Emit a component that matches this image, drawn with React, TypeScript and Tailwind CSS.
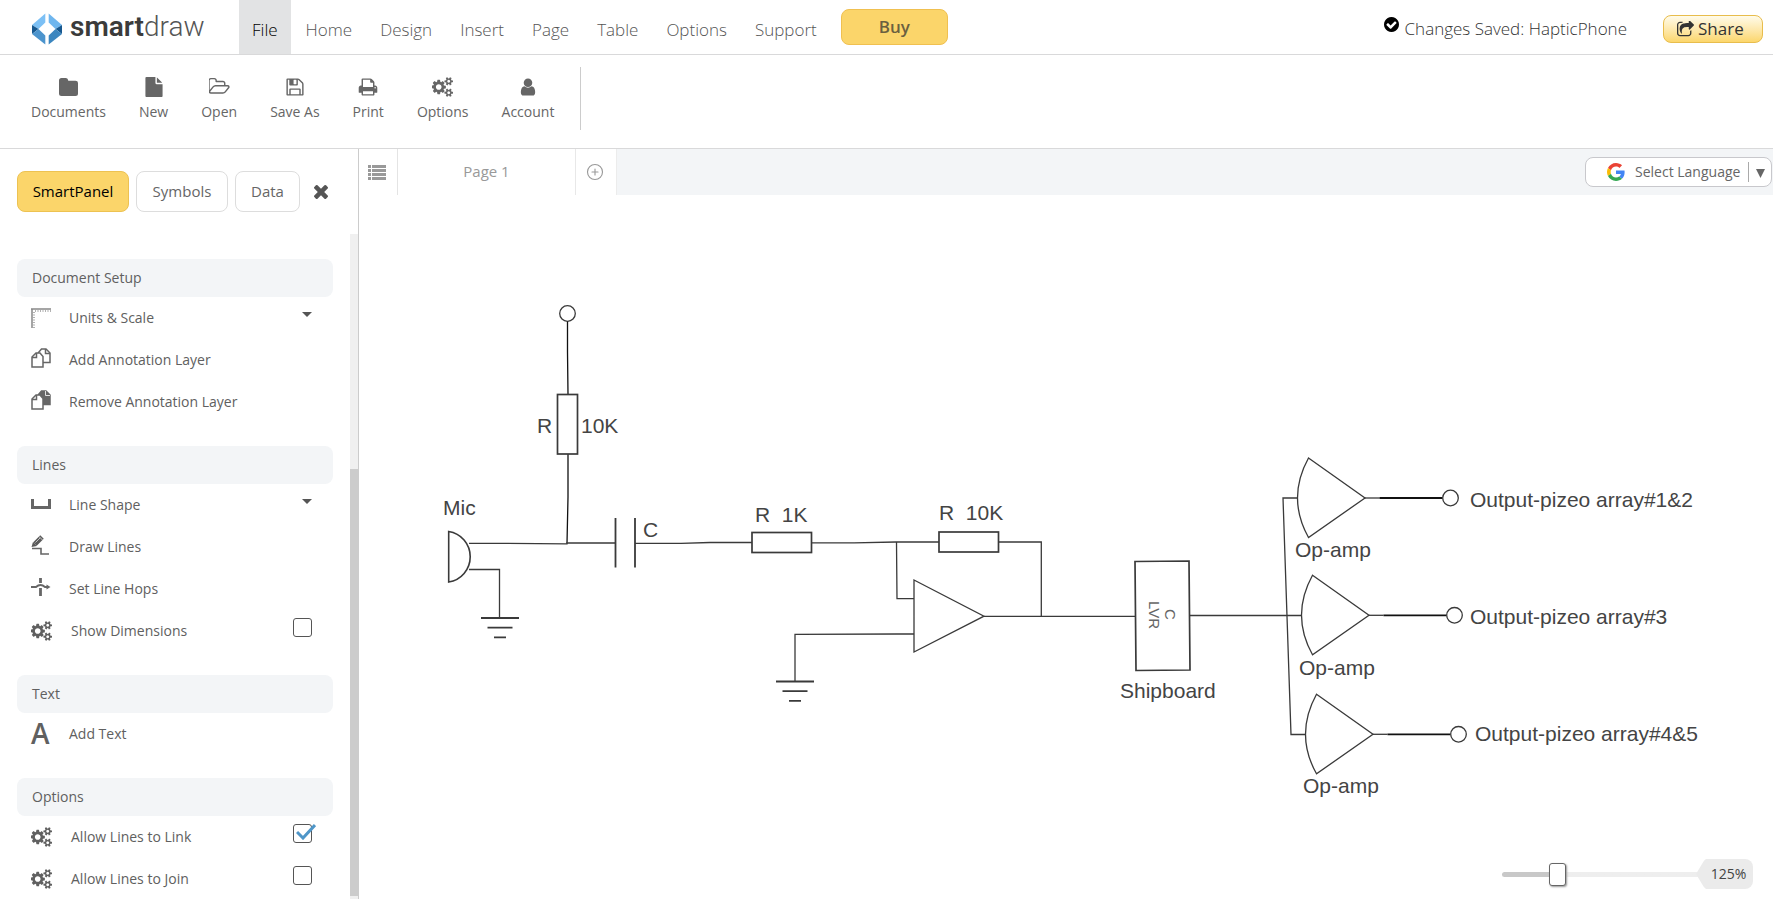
import React from "react";
import { CirclePlus } from "lucide-react";

const PATHS = {
  file: "M1152 512v-472q22 14 36 28l408 408q14 14 28 36h-472zm-128 32q0 40 28 68t68 28h544v1056q0 40-28 68t-68 28h-1344q-40 0-68-28t-28-68v-1600q0-40 28-68t68-28h800v544z",
  folderOpen:
    "M1717 931q0-35-53-35h-1088q-40 0-85.5 21.5t-71.5 52.5l-294 363q-18 24-18 40 0 35 53 35h1088q40 0 86-22t71-53l294-363q18-22 18-39zm-1141-163h768v-160q0-40-28-68t-68-28h-576q-40 0-68-28t-28-68v-64q0-40-28-68t-68-28h-320q-40 0-68 28t-28 68v853l256-315q44-53 116-87.5t140-34.5zm1269 163q0 62-46 120l-295 363q-43 53-116 87.5t-140 34.5h-1088q-92 0-158-66t-66-158v-960q0-92 66-158t158-66h320q92 0 158 66t66 158v32h544q92 0 158 66t66 158v160h192q54 0 99 24.5t67 70.5q15 32 15 68z",
  print:
    "M448 1536h896v-256h-896v256zm0-640h896v-384h-160q-40 0-68-28t-28-68v-160h-640v640zm1152 64q0-26-19-45t-45-19-45 19-19 45 19 45 45 19 45-19 19-45zm128 0v416q0 13-9.5 22.5t-22.5 9.5h-224v160q0 40-28 68t-68 28h-960q-40 0-68-28t-28-68v-160h-224q-13 0-22.5-9.5t-9.5-22.5v-416q0-79 56.5-135.5t135.5-56.5h64v-544q0-40 28-68t68-28h672q40 0 88 20t76 48l152 152q28 28 48 76t20 88v256h64q79 0 135.5 56.5t56.5 135.5z",
  save: "M512 1536h768v-384h-768v384zm896 0h128v-896q0-14-10-38.5t-20-34.5l-281-281q-10-10-34-20t-39-10v416q0 40-28 68t-68 28h-576q-40 0-68-28t-28-68v-416h-128v1280h128v-416q0-40 28-68t68-28h832q40 0 68 28t28 68v416zm-384-928v-320q0-13-9.5-22.5t-22.5-9.5h-192q-13 0-22.5 9.5t-9.5 22.5v320q0 13 9.5 22.5t22.5 9.5h192q13 0 22.5-9.5t9.5-22.5zm640 32v928q0 40-28 68t-68 28h-1344q-40 0-68-28t-28-68v-1344q0-40 28-68t68-28h928q40 0 88 20t76 48l280 280q28 28 48 76t20 88z",
  user: "M1536 1399q0 109-62.5 187t-150.5 78h-854q-88 0-150.5-78t-62.5-187q0-85 8.5-160.5t31.5-152 58.5-131 94-89 134.5-34.5q131 128 313 128t313-128q76 0 134.5 34.5t94 89 58.5 131 31.5 152 8.5 160.5zm-256-887q0 159-112.5 271.5t-271.5 112.5-271.5-112.5-112.5-271.5 112.5-271.5 271.5-112.5 271.5 112.5 112.5 271.5z",
  cogs: "M832 896q0-106-75-181t-181-75-181 75-75 181 75 181 181 75 181-75 75-181zm768 512q0-52-38-90t-90-38-90 38-38 90q0 53 37.5 90.5t90.5 37.5 90.5-37.5 37.5-90.5zm0-1024q0-52-38-90t-90-38-90 38-38 90q0 53 37.5 90.5t90.5 37.5 90.5-37.5 37.5-90.5zm-384 421v185q0 10-7 19.5t-16 10.5l-155 24q-11 35-32 76 34 48 90 115 7 11 7 20 0 12-7 19-23 30-82.5 89.5t-78.5 59.5q-11 0-21-7l-115-90q-37 19-77 31-11 108-23 155-7 24-30 24h-186q-11 0-20-7.5t-10-17.5l-23-153q-34-10-75-31l-118 89q-7 7-20 7-11 0-21-8-144-133-144-160 0-9 7-19 10-14 41-53t47-61q-23-44-35-82l-152-24q-10-1-17-9.5t-7-19.5v-185q0-10 7-19.5t16-10.5l155-24q11-35 32-76-34-48-90-115-7-11-7-20 0-12 7-20 22-30 82-89t79-59q11 0 21 7l115 90q34-18 77-32 11-108 23-154 7-24 30-24h186q11 0 20 7.5t10 17.5l23 153q34 10 75 31l118-89q8-7 20-7 11 0 21 8 144 133 144 160 0 8-7 19-12 16-42 54t-45 60q23 48 34 82l152 23q10 2 17 10.5t7 19.5zm640 533v140q0 16-149 31-12 27-30 52 51 113 51 138 0 4-4 7-122 71-124 71-8 0-46-47t-52-68q-20 2-30 2t-30-2q-14 21-52 68t-46 47q-2 0-124-71-4-3-4-7 0-25 51-138-18-25-30-52-149-15-149-31v-140q0-16 149-31 13-29 30-52-51-113-51-138 0-4 4-7 4-2 35-20t59-34 30-16q8 0 46 46.5t52 67.5q20-2 30-2t30 2q51-71 92-112l6-2q4 0 124 70 4 3 4 7 0 25-51 138 17 23 30 52 149 15 149 31zm0-1024v140q0 16-149 31-12 27-30 52 51 113 51 138 0 4-4 7-122 71-124 71-8 0-46-47t-52-68q-20 2-30 2t-30-2q-14 21-52 68t-46 47q-2 0-124-71-4-3-4-7 0-25 51-138-18-25-30-52-149-15-149-31v-140q0-16 149-31 13-29 30-52-51-113-51-138 0-4 4-7 4-2 35-20t59-34 30-16q8 0 46 46.5t52 67.5q20-2 30-2t30 2q51-71 92-112l6-2q4 0 124 70 4 3 4 7 0 25-51 138 17 23 30 52 149 15 149 31z",
  checkCircle:
    "M1412 734q0-28-18-46l-91-90q-19-19-45-19t-45 19l-408 407-226-226q-19-19-45-19t-45 19l-91 90q-18 18-18 46 0 27 18 45l362 362q19 19 45 19 27 0 46-19l543-543q18-18 18-45zm252 162q0 209-103 385.5t-279.5 279.5-385.5 103-385.5-103-279.5-279.5-103-385.5 103-385.5 279.5-279.5 385.5-103 385.5 103 279.5 279.5 103 385.5z",
  times:
    "M1490 1322q0 40-28 68l-136 136q-28 28-68 28t-68-28l-294-294-294 294q-28 28-68 28t-68-28l-136-136q-28-28-28-68t28-68l294-294-294-294q-28-28-28-68t28-68l136-136q28-28 68-28t68 28l294 294 294-294q28-28 68-28t68 28l136 136q28 28 28 68t-28 68l-294 294 294 294q28 28 28 68z",
  share:
    "M1472 989v259q0 119-84.5 203.5t-203.5 84.5h-832q-119 0-203.5-84.5t-84.5-203.5v-832q0-119 84.5-203.5t203.5-84.5h255q13 0 22.5 9.5t9.5 22.5q0 27-26 32-77 26-133 60-10 4-16 4h-112q-66 0-113 47t-47 113v832q0 66 47 113t113 47h832q66 0 113-47t47-113v-214q0-19 18-29 28-13 54-37 16-16 35-8 21 9 21 29zm237-496l-384 384q-18 19-45 19-12 0-25-5-39-17-39-59v-192h-160q-323 0-438 131-119 137-74 473 3 23-20 34-8 2-12 2-16 0-26-13-10-14-21-31t-39.5-68.5-49.5-99.5-38.5-114-17.5-122q0-49 3.5-91t14-90 28-88 47-81.5 68.5-74 94.5-61.5 124.5-48.5 159.5-30.5 196.5-11h160v-192q0-42 39-59 13-5 25-5 26 0 45 19l384 384q19 19 19 45t-19 45z",
};

function Glyph({ d, box = "0 0 1792 1792", className }: { d: string; box?: string; className?: string }) {
  return (
    <svg viewBox={box} fill="currentColor" className={className} aria-hidden="true">
      <path d={d} />
    </svg>
  );
}

const Cogs = ({ className }: { className?: string }) => (
  <Glyph d={PATHS.cogs} box="0 0 1920 1792" className={className} />
);

function Logo() {
  return (
    <a href="#" aria-label="smartdraw" className="flex h-full w-[239px] shrink-0 items-center pt-1 pl-8">
      <svg viewBox="0 0 30 32" className="h-8 w-[30px]" aria-hidden="true">
        <path d="M13.300 0.500V9.500L6.500 16L0 12Z" fill="#7cc0f5" />
        <path d="M16.700 0.500V9.500L23.500 16L30 12Z" fill="#6fb6ee" />
        <path d="M0 12L6.500 16L0 21Z" fill="#17588f" />
        <path d="M30 12L23.500 16L30 21Z" fill="#17588f" />
        <path d="M0 21L6.500 16L13.300 22.500V31.500Z" fill="#4c94cd" />
        <path d="M30 21L23.500 16L16.700 22.500V31.500Z" fill="#3c86bf" />
      </svg>
      <span className="mb-1 ml-2 font-['Roboto','Liberation_Sans',sans-serif] text-[28px] leading-8 font-light text-[#555]">
        <span className="font-semibold text-[#3b3b3b]">smart</span>draw
      </span>
    </a>
  );
}

function Header() {
  return (
    <header className="flex h-[55px] shrink-0 items-center border-b border-[#d9d9da]">
      <Logo />
      <nav className="flex h-full items-center text-[17px] font-light text-[#555]">
        <a href="#" className="mr-[15px] flex h-full items-center bg-[#e2e3e4] px-[13px] pt-[6px] text-black">
          File
        </a>
        <div className="flex gap-[28px] pt-[6px]">
          {["Home", "Design", "Insert", "Page", "Table", "Options", "Support"].map((n) => (
            <a href="#" key={n}>
              {n}
            </a>
          ))}
        </div>
      </nav>
      <button className="ml-6 h-9 w-[107px] rounded-lg border border-[#f0c050] bg-[#fbd56a] text-[17px] font-semibold text-[#6b6040]">
        Buy
      </button>
      <div className="ml-auto flex items-center gap-[6px] pt-[3px] text-[17px] font-light text-[#333]">
        <Glyph d={PATHS.checkCircle} box="128 128 1536 1536" className="mb-2 size-[15px] text-black" />
        <span>Changes Saved: HapticPhone</span>
      </div>
      <button className="mt-[3px] mr-[10px] ml-9 flex h-7 w-[100px] items-center gap-1 rounded-lg border border-[#e8bd4c] bg-linear-to-b from-[#fffbe9] to-[#fcd66b] pl-[13px] text-[17px] text-[#333]">
        <Glyph d={PATHS.share} box="64 64 1664 1536" className="h-4 w-[17px]" />
        Share
      </button>
    </header>
  );
}

const TOOLS: { label: string; icon: React.ReactNode }[] = [
  {
    label: "Documents",
    icon: (
      <svg viewBox="0 0 19 18" fill="currentColor" className="h-[18px] w-[19px]" aria-hidden="true">
        <path d="M2.500 0H7Q9 0 9.300 2.800H16.500Q19 2.800 19 5V15.500Q19 18 16.500 18H2.500Q0 18 0 15.500V2.500Q0 0 2.500 0Z" />
      </svg>
    ),
  },
  { label: "New", icon: <Glyph d={PATHS.file} className="size-5" box="128 0 1536 1792" /> },
  { label: "Open", icon: <Glyph d={PATHS.folderOpen} className="size-[21px]" box="0 0 1879 1792" /> },
  { label: "Save As", icon: <Glyph d={PATHS.save} className="size-5" /> },
  { label: "Print", icon: <Glyph d={PATHS.print} className="size-5" /> },
  { label: "Options", icon: <Cogs className="h-5 w-[22px]" /> },
  { label: "Account", icon: <Glyph d={PATHS.user} className="size-5" /> },
];

function Toolbar() {
  return (
    <div className="flex h-[94px] shrink-0 items-start border-b border-[#d9d9da] pt-3 pl-[31px]">
      <div className="flex gap-[33px] pt-[9px]">
        {TOOLS.map((t) => (
          <button key={t.label} className="flex flex-col items-center gap-[5px] text-sm text-[#666]">
            <span className="flex h-[21px] items-center">{t.icon}</span>
            {t.label}
          </button>
        ))}
      </div>
      <div className="ml-[26px] h-[63px] w-px bg-[#ccc]" />
    </div>
  );
}

function LayerIcon({ filled }: { filled?: boolean }) {
  return (
    <svg viewBox="0 0 20 20" className="mb-1 size-5" fill="none" stroke="#666" strokeWidth="1.500" aria-hidden="true">
      <path d="M7.500 5.500 V4.500 L10.500 1 H15 L19 5 V14.500 H12" fill={filled ? "#666" : "none"} />
      <path d="M14.500 1 V5.500 H19" stroke={filled ? "#fff" : "#666"} strokeWidth={filled ? "0.8" : "1.500"} />
      <path d="M1 9 L5 5 H9 L12 8.500 V19 H1Z" fill="#fff" />
      <path d="M1 9.500 H5.500 V5" />
    </svg>
  );
}

function RulerIcon() {
  return (
    <svg viewBox="0 0 20 20" className="size-5" fill="none" aria-hidden="true">
      <path d="M0 1H20M1 1V20" stroke="#888" strokeWidth="1.500" />
      <path d="M4 3H20M3 4V20" stroke="#999" strokeWidth="1.500" strokeDasharray="1 1.500" />
    </svg>
  );
}

function LineShapeIcon() {
  return (
    <svg viewBox="0 0 20 20" className="size-5" fill="none" aria-hidden="true">
      <path d="M1.500 4V12.500H18.500V4" stroke="#666" strokeWidth="3" />
    </svg>
  );
}

function DrawIcon() {
  return (
    <svg viewBox="0 0 20 20" className="mb-1 size-5" fill="none" aria-hidden="true">
      <path d="M4 9 L11 2" stroke="#5a5a5a" strokeWidth="5" />
      <path d="M0.500 12 L2 7 L6 11Z" fill="#5a5a5a" />
      <path d="M4.500 7.500 L9 3" stroke="#ddd" strokeWidth="0.800" />
      <path d="M8 1.500 L11.500 5" stroke="#fff" strokeWidth="0.700" />
      <path d="M1 13.500H10V19H18" stroke="#666" strokeWidth="1.600" />
    </svg>
  );
}

function HopIcon() {
  return (
    <svg viewBox="0 0 20 20" className="mb-1 size-5" fill="none" stroke="#666" aria-hidden="true">
      <path d="M9.500 1V6M9.500 11V19" strokeWidth="2.800" />
      <path d="M0 10H5Q9.500 6 14 10H17" strokeWidth="2" />
      <path d="M15.500 7.500L19.500 10L15.500 12.500Z" fill="#666" stroke="none" />
    </svg>
  );
}

type Item = { label: string; icon: React.ReactNode; kind?: "menu" | "check"; checked?: boolean };

const GROUPS: { title: string; items: Item[] }[] = [
  {
    title: "Document Setup",
    items: [
      { label: "Units & Scale", icon: <RulerIcon />, kind: "menu" },
      { label: "Add Annotation Layer", icon: <LayerIcon /> },
      { label: "Remove Annotation Layer", icon: <LayerIcon filled /> },
    ],
  },
  {
    title: "Lines",
    items: [
      { label: "Line Shape", icon: <LineShapeIcon />, kind: "menu" },
      { label: "Draw Lines", icon: <DrawIcon /> },
      { label: "Set Line Hops", icon: <HopIcon /> },
      { label: "Show Dimensions", icon: <Cogs className="h-5 w-[22px]" />, kind: "check" },
    ],
  },
  {
    title: "Text",
    items: [
      {
        label: "Add Text",
        icon: (
          <span className="text-[28px] leading-7 font-semibold" aria-hidden="true">
            A
          </span>
        ),
      },
    ],
  },
  {
    title: "Options",
    items: [
      { label: "Allow Lines to Link", icon: <Cogs className="h-5 w-[22px]" />, kind: "check", checked: true },
      { label: "Allow Lines to Join", icon: <Cogs className="h-5 w-[22px]" />, kind: "check" },
    ],
  },
];

function Row({ item }: { item: Item }) {
  if (item.kind === "check") {
    return (
      <label className="flex h-[42px] items-center pr-[21px] pl-[14px]">
        <span className="w-10">{item.icon}</span>
        <span className="grow">{item.label}</span>
        <span className="relative mb-2 size-[19px]">
          <input
            type="checkbox"
            defaultChecked={item.checked}
            className="peer block size-[19px] appearance-none rounded-[3px] border border-[#555] bg-white"
          />
          <svg
            viewBox="0 0 20 16"
            className="pointer-events-none absolute top-0 left-[3px] hidden h-4 w-5 peer-checked:block"
            fill="none"
            aria-hidden="true"
          >
            <path d="M1 8L7 14L19 1" stroke="#4f96c8" strokeWidth="3" />
          </svg>
        </span>
      </label>
    );
  }
  return (
    <button className="flex h-[42px] w-full items-center pr-[21px] pl-[14px] text-left">
      <span className="w-[38px]">{item.icon}</span>
      <span className="grow">{item.label}</span>
      {item.kind === "menu" && (
        <svg viewBox="0 0 10 5" className="mb-2 h-[5px] w-[10px]" fill="#555" aria-hidden="true">
          <path d="M0 0H10L5 5Z" />
        </svg>
      )}
    </button>
  );
}

function SidePanel() {
  return (
    <aside className="flex w-[359px] shrink-0 flex-col border-r border-[#ccc]">
      <div className="flex shrink-0 items-center gap-[7px] pt-[22px] pl-[17px] text-[15px] text-[#666]">
        <button className="h-[41px] w-28 rounded-lg border border-[#edc252] bg-[#fbd56a] text-black">SmartPanel</button>
        <button className="h-[41px] w-[92px] rounded-lg border border-[#ddd]">Symbols</button>
        <button className="h-[41px] w-[65px] rounded-lg border border-[#ddd]">Data</button>
        <button aria-label="Close panel" className="ml-[7px]">
          <Glyph d={PATHS.times} box="302 366 1188 1188" className="size-[14px] text-[#555]" />
        </button>
      </div>
      <div className="mt-[22px] flex min-h-0 grow">
        <div className="flex grow flex-col gap-[23px] overflow-hidden pt-[25px] pr-[17px] pl-[17px] text-sm text-[#606060]">
          {GROUPS.map((g) => (
            <section key={g.title}>
              <h2 className="flex h-[38px] items-center rounded-lg bg-[#f3f5f7] pl-[15px]">{g.title}</h2>
              {g.items.map((i) => (
                <Row key={i.label} item={i} />
              ))}
            </section>
          ))}
        </div>
        <div className="flex w-2 shrink-0 flex-col bg-[#f0f0f0] pb-[3px]">
          <div className="mt-auto h-[64.5%] bg-[#ccc]" />
        </div>
      </div>
    </aside>
  );
}

function GoogleMark() {
  return (
    <svg viewBox="0 0 48 48" className="size-[18px]" aria-hidden="true">
      <path fill="#EA4335" d="M24 9.500c3.540 0 6.710 1.220 9.210 3.600l6.850-6.850C35.900 2.380 30.470 0 24 0 14.620 0 6.510 5.380 2.560 13.220l7.980 6.190C12.430 13.720 17.740 9.500 24 9.500z" />
      <path fill="#4285F4" d="M46.980 24.550c0-1.570-.15-3.090-.38-4.550H24v9.020h12.940c-.58 2.960-2.260 5.480-4.780 7.180l7.730 6c4.510-4.180 7.090-10.360 7.090-17.650z" />
      <path fill="#FBBC05" d="M10.530 28.590c-.48-1.450-.76-2.990-.76-4.590s.27-3.140.76-4.590l-7.980-6.190C.92 16.460 0 20.120 0 24c0 3.880.92 7.540 2.560 10.780l7.970-6.190z" />
      <path fill="#34A853" d="M24 48c6.480 0 11.930-2.130 15.890-5.810l-7.730-6c-2.150 1.450-4.920 2.300-8.160 2.300-6.260 0-11.570-4.220-13.470-9.910l-7.980 6.190C6.510 42.620 14.620 48 24 48z" />
    </svg>
  );
}

function PageTabs() {
  return (
    <div className="flex h-[46px] shrink-0 bg-[#f3f5f7] text-[#999]">
      <button aria-label="Page list" className="flex w-[39px] items-center justify-center border-r border-[#e4e4e4] bg-white">
        <svg viewBox="0 0 18 15" className="mr-[2px] h-[15px] w-[18px]" fill="#999" aria-hidden="true">
          <path d="M0 0h3v3H0zM4 0h14v3H4zM0 4h3v3H0zM4 4h14v3H4zM0 8h3v3H0zM4 8h14v3H4zM0 12h3v3H0zM4 12h14v3H4z" />
        </svg>
      </button>
      <button className="w-[178px] border-r border-[#e8e8e8] bg-white pb-[2px] text-[15px]">Page 1</button>
      <button
        aria-label="Add page"
        className="flex w-[41px] items-center justify-center border-r border-[#ececec] bg-white pr-[2px]"
      >
        <CirclePlus className="size-[18px]" strokeWidth={1.5} />
      </button>
      <button className="mt-2 mr-px ml-auto flex h-[30px] w-[187px] items-center rounded-lg border border-[#c8c8cc] bg-white pl-[21px] text-sm text-[#666]">
        <GoogleMark />
        <span className="ml-[10px] grow text-left">Select Language</span>
        <span className="h-5 w-px bg-[#aaa]" />
        <svg viewBox="0 0 9 9" className="mt-[3px] mr-[6px] ml-[7px] size-[9px]" fill="#666" aria-hidden="true">
          <path d="M0 0H9L4.500 9Z" />
        </svg>
      </button>
    </div>
  );
}

function Amp({ x, y }: { x: number; y: number }) {
  return (
    <g transform={`translate(${x} ${y})`}>
      <path d="M11 -40 L67.500 0 L11 39.500 Q-11 0 11 -40Z" />
      <path d="M67.500 0H82" />
      <path d="M82 0H145" stroke="#111" strokeWidth="1.800" />
      <circle cx="153" cy="0" r="7.800" />
    </g>
  );
}

function Ground({ x, y }: { x: number; y: number }) {
  return (
    <path transform={`translate(${x} ${y})`} d="M-19 0H19M-12.500 9.700H12.500M-6 19.400H6" strokeWidth="1.800" />
  );
}

function Schematic() {
  return (
    <svg
      viewBox="359 195 1414 704"
      preserveAspectRatio="xMinYMin meet"
      className="absolute inset-0 size-full"
      role="img"
      aria-label="Circuit diagram"
    >
      <g fill="none" stroke="#3a3a3a" strokeWidth="1.300">
        <circle cx="567.500" cy="313.500" r="7.800" />
        <path d="M567.500 321.500V352L568 394.500M568 454V497L567 543.500" stroke="#111" />
        <rect x="557.500" y="394.500" width="20" height="59.500" strokeWidth="1.700" />

        <path d="M448.700 531.500V582A25 25.500 0 0 0 448.700 531.500Z" strokeWidth="1.600" />
        <path d="M469 543.300H500L567 543.800V543H615.500" />
        <path d="M469 569.500H499.500V618" />
        <Ground x={500} y={618} />

        <path d="M615.500 518V567.500M635 518V567.500" strokeWidth="1.800" />
        <path d="M635 543.300H681L710 542.500H752" />
        <rect x="752" y="532.500" width="59.500" height="20" strokeWidth="1.700" />
        <path d="M811.500 542.800H854L896 542H939" />
        <rect x="939" y="532" width="59.500" height="20" strokeWidth="1.700" />
        <path d="M998.500 542H1041.300V616" />

        <path d="M896.500 542L897 598.700H914M914 580L984 616.200L914 652Z" />
        <path d="M914 634H897L795 634.300V681" />
        <Ground x={795} y={681.5} />
        <path d="M984 616.300H1135.500" />

        <path d="M1135 561.500L1189 561L1190 670L1136 670.500Z" strokeWidth="1.700" />
        <path d="M1190 615.500H1301.500" />
        <path d="M1297.500 498H1283L1291 734.500H1305.500" />
        <Amp x={1297.5} y={498} />
        <Amp x={1301.5} y={615.3} />
        <Amp x={1305.5} y={734.3} />
      </g>
      <g className="fill-[#444] font-['Liberation_Sans',Arial,sans-serif] text-[21px]">
        <text x="537" y="433">R</text>
        <text x="581" y="433">10K</text>
        <text x="443" y="515">Mic</text>
        <text x="643" y="537">C</text>
        <text x="755" y="522">{"R\u00a0 1K"}</text>
        <text x="939" y="520">{"R\u00a0 10K"}</text>
        <text x="1120" y="698">Shipboard</text>
        <text x="1295" y="557">Op-amp</text>
        <text x="1299" y="675">Op-amp</text>
        <text x="1303" y="793">Op-amp</text>
        <text x="1470" y="507">Output-pizeo array#1&amp;2</text>
        <text x="1470" y="624">Output-pizeo array#3</text>
        <text x="1475" y="741">Output-pizeo array#4&amp;5</text>
      </g>
      <g className="fill-[#666] font-['Liberation_Sans',Arial,sans-serif] text-[15px]">
        <text transform="translate(1149 601) rotate(90)">LVR</text>
        <text transform="translate(1165 609) rotate(90)">C</text>
      </g>
    </svg>
  );
}

function ZoomControl() {
  return (
    <div className="absolute right-5 bottom-[10px] flex h-[30px] items-center text-sm text-[#444]">
      <input
        type="range"
        aria-label="Zoom"
        min={0}
        max={100}
        defaultValue={26}
        className="h-[30px] w-[198px] appearance-none bg-transparent [&::-webkit-slider-runnable-track]:h-[5px] [&::-webkit-slider-runnable-track]:rounded-full [&::-webkit-slider-runnable-track]:bg-linear-to-r [&::-webkit-slider-runnable-track]:from-[#c8c8c8] [&::-webkit-slider-runnable-track]:from-[28%] [&::-webkit-slider-runnable-track]:to-[#eee] [&::-webkit-slider-runnable-track]:to-[28%] [&::-webkit-slider-thumb]:-mt-[9px] [&::-webkit-slider-thumb]:h-[23px] [&::-webkit-slider-thumb]:w-[17px] [&::-webkit-slider-thumb]:appearance-none [&::-webkit-slider-thumb]:rounded-[3px] [&::-webkit-slider-thumb]:border [&::-webkit-slider-thumb]:border-[#666] [&::-webkit-slider-thumb]:bg-white [&::-webkit-slider-thumb]:shadow-[1px_1px_2px_#999]"
      />
      <svg viewBox="0 0 10 30" className="-ml-1 h-[30px] w-[10px]" fill="#ebebeb" aria-hidden="true">
        <path d="M10 0Q8 1 6 5L0 15L6 25Q8 29 10 30Z" />
      </svg>
      <output className="flex h-[30px] w-[47px] items-center justify-center rounded-r-lg bg-[#ebebeb] pr-[2px]">125%</output>
    </div>
  );
}

export default function App() {
  return (
    <div className="flex h-screen flex-col overflow-hidden bg-white font-['Open_Sans','Noto_Sans',sans-serif]">
      <Header />
      <Toolbar />
      <div className="flex min-h-0 grow">
        <SidePanel />
        <main className="flex min-w-0 grow flex-col">
          <PageTabs />
          <div className="relative grow">
            <Schematic />
            <ZoomControl />
          </div>
        </main>
      </div>
    </div>
  );
}
